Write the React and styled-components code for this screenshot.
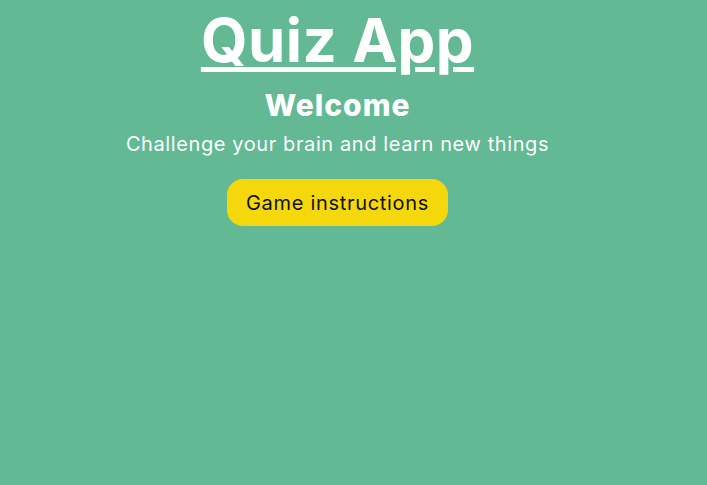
import React from 'react';
import styled, { createGlobalStyle } from 'styled-components';

const GlobalStyle = createGlobalStyle`
  html, body {
    margin: 0;
    padding: 0;
    height: 100%;
    background: #62b994;
    font-family: "Inter", "Noto Sans", sans-serif;
  }
`;

const StyledPage = styled.main`
  display: flex;
  flex-direction: column;
  align-items: center;
  width: 675px;
  min-height: 485px;
  color: #ffffff;
`;

const StyledTitle = styled.h1`
  margin: 4px 0 0;
  font-size: 60px;
  font-weight: 700;
  letter-spacing: 0.5px;
  line-height: 1.2;
  text-decoration: underline;
  text-decoration-thickness: 5px;
  text-underline-offset: 5px;
`;

const StyledWelcome = styled.h2`
  margin: 11px 0 0;
  font-size: 30px;
  font-weight: 800;
  letter-spacing: 1px;
  line-height: 1.2;
`;

const StyledSubtitle = styled.p`
  margin: 8px 0 0;
  font-size: 20px;
  letter-spacing: 0.6px;
  line-height: 1.3;
`;

const StyledButton = styled.button`
  margin-top: 22px;
  padding: 0 19px;
  height: 47px;
  border: none;
  border-radius: 16px;
  background: #f5d80c;
  color: #111111;
  font-family: inherit;
  font-size: 20px;
  letter-spacing: 0.7px;
  cursor: pointer;
`;

const App = () => (
  <>
    <GlobalStyle />
    <StyledPage>
      <StyledTitle>Quiz App</StyledTitle>
      <StyledWelcome>Welcome</StyledWelcome>
      <StyledSubtitle>Challenge your brain and learn new things</StyledSubtitle>
      <StyledButton>Game instructions</StyledButton>
    </StyledPage>
  </>
);

export default App;
